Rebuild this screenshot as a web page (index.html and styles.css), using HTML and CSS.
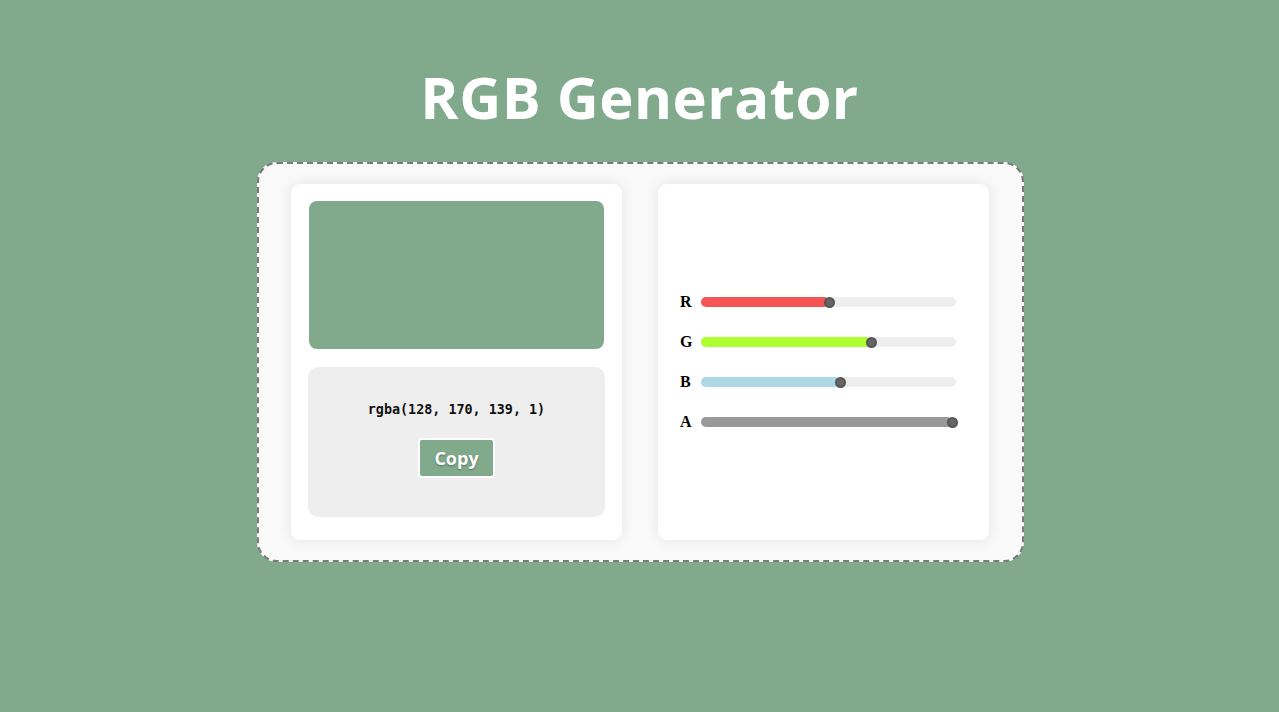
FILE: index.html
```html
<!DOCTYPE html>
<html>
<head>
<meta charset="utf-8">
<title>RGB Generator</title>
<link rel="stylesheet" href="styles.css">
</head>
<body>
<h1 class="title">RGB Generator</h1>
<div class="wrap">
  <div class="card left">
    <div class="preview"></div>
    <div class="output">
      <div class="code">rgba(128, 170, 139, 1)</div>
      <button class="copy">Copy</button>
    </div>
  </div>
  <div class="card right">
    <div class="sliders">
      <div class="row"><span class="lbl">R</span><div class="track"><div class="fill red" style="width:128px"></div><span class="thumb" style="left:128px"></span></div></div>
      <div class="row"><span class="lbl">G</span><div class="track"><div class="fill green" style="width:170px"></div><span class="thumb" style="left:170px"></span></div></div>
      <div class="row"><span class="lbl">B</span><div class="track"><div class="fill blue" style="width:139px"></div><span class="thumb" style="left:139px"></span></div></div>
      <div class="row"><span class="lbl">A</span><div class="track"><div class="fill gray" style="width:251px"></div><span class="thumb" style="left:251px"></span></div></div>
    </div>
  </div>
</div>
</body>
</html>
```
FILE: styles.css
```css
html, body {
  margin: 0;
  padding: 0;
  background: #80aa8b;
  height: 100%;
}
body {
  padding-top: 1px;
}
.title {
  margin: 61px 0 30px;
  text-align: center;
  color: #fff;
  font-family: "Open Sans", sans-serif;
  font-weight: 700;
  font-size: 58px;
  line-height: 70px;
  letter-spacing: 0.5px;
}
.wrap {
  width: 767px;
  margin: 0 auto;
  position: relative;
  left: 1px;
  border: 2px dashed #7a7a7a;
  border-radius: 20px;
  background: #f9f9f9;
  padding: 20px 32px;
  display: flex;
  gap: 36px;
  box-sizing: border-box;
}
.card {
  background: #fff;
  border-radius: 9px;
  width: 331px;
  height: 356px;
  box-shadow: 0 0 14px rgba(0, 0, 0, 0.09);
  box-sizing: border-box;
}
.left {
  padding: 17px 17px 23px 17px;
  display: flex;
  flex-direction: column;
  gap: 18px;
}
.preview {
  height: 148px;
  background: #80aa8b;
  border-radius: 8px;
  margin: 0 1px;
}
.output {
  flex: 1;
  background: #eeeeee;
  border-radius: 10px;
  display: flex;
  flex-direction: column;
  align-items: center;
  padding-top: 34px;
  box-sizing: border-box;
}
.code {
  font-family: "DejaVu Sans Mono", monospace;
  font-weight: 700;
  font-size: 13.4px;
  line-height: 18px;
  color: #111;
}
.copy {
  margin-top: 19px;
  width: 77px;
  height: 40px;
  background: #80aa8b;
  border: 2px solid #fff;
  border-radius: 4px;
  color: #fff;
  font-family: "Open Sans", sans-serif;
  font-weight: 700;
  font-size: 18px;
  text-shadow: 0 1px 2px rgba(0, 0, 0, 0.35);
  padding: 0;
}
.right {
  display: flex;
  align-items: center;
  padding-left: 22px;
}
.sliders {
  display: flex;
  flex-direction: column;
  gap: 30px;
  margin-top: 0;
}
.row {
  display: flex;
  align-items: center;
  height: 10px;
}
.lbl {
  width: 21px;
  font-family: "Liberation Serif", serif;
  font-weight: 700;
  font-size: 16px;
  color: #000;
}
.track {
  position: relative;
  width: 255px;
  height: 10px;
  border-radius: 5px;
  background: #eeeeee;
}
.fill {
  height: 10px;
  border-radius: 5px;
}
.red { background: #f55555; }
.green { background: #adff2f; }
.blue { background: #add8e6; }
.gray { background: #999999; }
.thumb {
  position: absolute;
  top: 50%;
  width: 11px;
  height: 11px;
  margin: -5.5px 0 0 -5.5px;
  border-radius: 50%;
  background: #666;
  border: 2px solid #555;
  box-sizing: border-box;
}
```
